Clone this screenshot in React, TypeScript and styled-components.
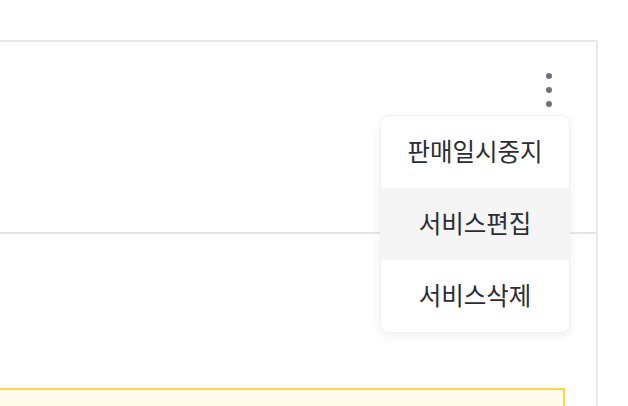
import styled, { createGlobalStyle } from 'styled-components'

const GlobalStyle = createGlobalStyle`
  html, body {
    margin: 0;
    padding: 0;
    background: #ffffff;
    overflow: hidden;
  }
  body {
    font-family: "Noto Sans CJK KR", "Noto Sans", sans-serif;
  }
`

const menuItems = ['판매일시중지', '서비스편집', '서비스삭제']

function App() {
  return (
    <>
      <GlobalStyle />
      <Page>
        <Card>
          <CardHeader>
            <MoreButton aria-label="more">
              <Dot />
              <Dot />
              <Dot />
            </MoreButton>
            <Menu>
              {menuItems.map((label, i) => (
                <MenuItem key={label} $active={i === 1}>
                  {label}
                </MenuItem>
              ))}
            </Menu>
          </CardHeader>
          <Divider />
          <CardBody>
            <Notice />
          </CardBody>
        </Card>
      </Page>
    </>
  )
}

export default App

const Page = styled.div`
  width: 628px;
  height: 406px;
  padding-top: 40px;
  box-sizing: border-box;
  overflow: hidden;
`

const Card = styled.div`
  margin-left: -20px;
  width: 618px;
  box-sizing: border-box;
  border: 2px solid #e8e8e8;
  border-bottom: none;
  height: 400px;
`

const CardHeader = styled.div`
  position: relative;
  height: 190px;
  display: flex;
  justify-content: flex-end;
  align-items: flex-start;
  padding: 31px 44px 0 0;
  box-sizing: border-box;
`

const MoreButton = styled.button`
  display: flex;
  flex-direction: column;
  align-items: center;
  gap: 8px;
  padding: 0;
  margin: 0;
  border: none;
  background: none;
  width: 6px;
  cursor: pointer;
`

const Dot = styled.span`
  display: block;
  width: 6px;
  height: 6px;
  border-radius: 50%;
  background: #6f6f7e;
`

const Menu = styled.ul`
  position: absolute;
  top: 73px;
  right: 26px;
  width: 190px;
  margin: 0;
  padding: 0;
  list-style: none;
  background: #ffffff;
  border: 1px solid #f1f1f5;
  border-radius: 9px;
  box-shadow: 0 3px 10px rgba(30, 30, 60, 0.07);
  overflow: hidden;
  box-sizing: border-box;
  z-index: 2;
`

const MenuItem = styled.li<{ $active?: boolean }>`
  height: 72px;
  display: flex;
  align-items: center;
  justify-content: center;
  padding-bottom: 3px;
  box-sizing: border-box;
  font-size: 24.5px;
  color: #2c2c35;
  background: ${(p) => (p.$active ? '#f5f5f5' : 'transparent')};
  letter-spacing: 0;
`

const Divider = styled.div`
  height: 2px;
  background: #e6e6e6;
`

const CardBody = styled.div`
  padding: 154px 31px 0 0;
`

const Notice = styled.div`
  height: 60px;
  border: 2px solid #fdd54c;
  border-left: none;
  background: #fffbea;
`
